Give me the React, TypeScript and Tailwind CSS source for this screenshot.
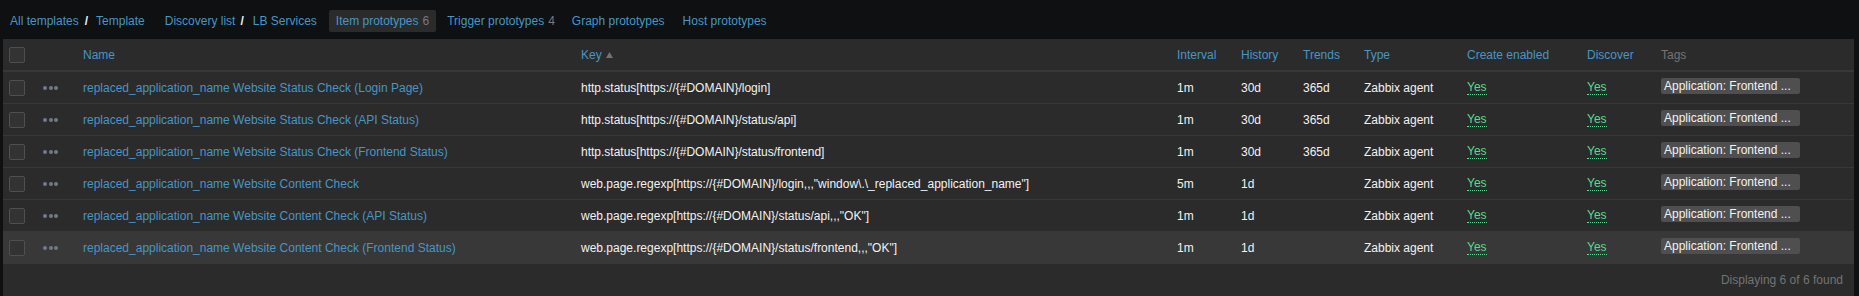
import React from "react";

type Row = {
  name: string;
  key: string;
  interval: string;
  history: string;
  trends: string;
};

const rows: Row[] = [
  {
    name: "replaced_application_name Website Status Check (Login Page)",
    key: "http.status[https://{#DOMAIN}/login]",
    interval: "1m",
    history: "30d",
    trends: "365d",
  },
  {
    name: "replaced_application_name Website Status Check (API Status)",
    key: "http.status[https://{#DOMAIN}/status/api]",
    interval: "1m",
    history: "30d",
    trends: "365d",
  },
  {
    name: "replaced_application_name Website Status Check (Frontend Status)",
    key: "http.status[https://{#DOMAIN}/status/frontend]",
    interval: "1m",
    history: "30d",
    trends: "365d",
  },
  {
    name: "replaced_application_name Website Content Check",
    key: 'web.page.regexp[https://{#DOMAIN}/login,,,"window\\.\\_replaced_application_name"]',
    interval: "5m",
    history: "1d",
    trends: "",
  },
  {
    name: "replaced_application_name Website Content Check (API Status)",
    key: 'web.page.regexp[https://{#DOMAIN}/status/api,,,"OK"]',
    interval: "1m",
    history: "1d",
    trends: "",
  },
  {
    name: "replaced_application_name Website Content Check (Frontend Status)",
    key: 'web.page.regexp[https://{#DOMAIN}/status/frontend,,,"OK"]',
    interval: "1m",
    history: "1d",
    trends: "",
  },
];

const cols =
  "grid grid-cols-[34px_40px_498px_596px_64px_62px_61px_103px_120px_74px_1fr] items-center";

const Checkbox = () => (
  <div className="ml-[6px] w-[16px] h-[16px] rounded-[2px] border border-[#4f4f4f] bg-[#333333]" />
);

const Dots = () => (
  <div className="ml-[6px] flex gap-[1.5px]">
    <span className="w-[4px] h-[4px] rounded-full bg-[#6f7b87]" />
    <span className="w-[4px] h-[4px] rounded-full bg-[#6f7b87]" />
    <span className="w-[4px] h-[4px] rounded-full bg-[#6f7b87]" />
  </div>
);

const Yes = () => (
  <span className="inline-block leading-[13px] text-[#59db8f] border-b border-dotted border-[#59db8f]">
    Yes
  </span>
);

const Slash = () => <span className="font-bold text-[#f2f2f2]">/</span>;

export default function App() {
  return (
    <div
      className="w-[1859px] h-[296px] overflow-hidden bg-[#0e1012] text-[12px] leading-[14px] text-[#f2f2f2]"
      style={{ fontFamily: '"Liberation Sans", Arial, sans-serif' }}
    >
      {/* navigation */}
      <div className="h-[39px] pt-[10px] flex items-start">
        <div className="h-[22px] flex items-center text-[#4796c4] whitespace-nowrap">
          <span className="ml-[10px]">All templates</span>
          <span className="ml-[6px]">
            <Slash />
          </span>
          <span className="ml-[8px]">Template</span>
          <span className="ml-[20px]">Discovery list</span>
          <span className="ml-[5px]">
            <Slash />
          </span>
          <span className="ml-[9px]">LB Services</span>
          <span className="ml-[12px] h-[22px] px-[7px] flex items-center bg-[#2b2b2b] rounded-[2px]">
            Item prototypes
            <span className="ml-[4px] text-[#7a7a7a]">6</span>
          </span>
          <span className="ml-[11px]">
            Trigger prototypes
            <span className="ml-[4px] text-[#7a7a7a]">4</span>
          </span>
          <span className="ml-[17px]">Graph prototypes</span>
          <span className="ml-[18px]">Host prototypes</span>
        </div>
      </div>

      {/* list */}
      <div className="ml-[3px] mr-[5px] bg-[#2b2b2b] h-[257px]">
        <div className={`${cols} h-[33px] border-b-2 border-[#383838] text-[#4796c4]`}>
          <Checkbox />
          <div />
          <div className="pl-[6px]">Name</div>
          <div className="pl-[6px] flex items-center">
            Key
            <svg width="7" height="6" viewBox="0 0 7 6" className="ml-[4px]">
              <path d="M3.5 0 L7 6 L0 6 Z" fill="#737373" />
            </svg>
          </div>
          <div className="pl-[6px]">Interval</div>
          <div className="pl-[6px]">History</div>
          <div className="pl-[6px]">Trends</div>
          <div className="pl-[6px]">Type</div>
          <div className="pl-[6px]">Create enabled</div>
          <div className="pl-[6px]">Discover</div>
          <div className="pl-[6px] text-[#737373]">Tags</div>
        </div>

        {rows.map((r, i) => (
          <div
            key={i}
            className={`${cols} h-[32px] border-b border-[#383838] ${
              i === rows.length - 1 ? "bg-[#383838]" : ""
            }`}
          >
            <Checkbox />
            <Dots />
            <div className="pl-[6px] text-[#4796c4] whitespace-nowrap">{r.name}</div>
            <div className="pl-[6px] whitespace-nowrap">{r.key}</div>
            <div className="pl-[6px]">{r.interval}</div>
            <div className="pl-[6px]">{r.history}</div>
            <div className="pl-[6px]">{r.trends}</div>
            <div className="pl-[6px] whitespace-nowrap">Zabbix agent</div>
            <div className="pl-[6px]">
              <Yes />
            </div>
            <div className="pl-[6px]">
              <Yes />
            </div>
            <div className="pl-[6px]">
              <span className="inline-block w-[139px] h-[16px] leading-[16px] px-[3px] rounded-[2px] bg-[#4f4f4f] whitespace-nowrap overflow-hidden">
                Application: Frontend ...
              </span>
            </div>
          </div>
        ))}

        <div className="pt-[9px] pr-[11px] text-right text-[#737373]">
          Displaying 6 of 6 found
        </div>
      </div>
    </div>
  );
}
